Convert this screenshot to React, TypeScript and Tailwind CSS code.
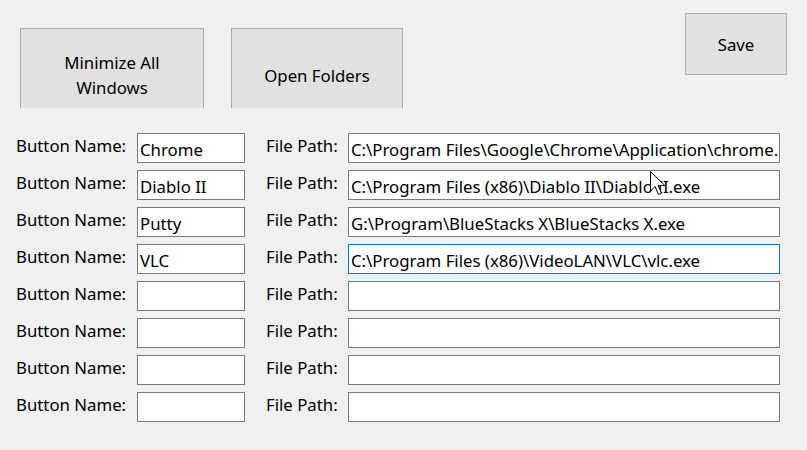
import React from "react";

const rows: { name: string; path: string; focused?: boolean }[] = [
  { name: "Chrome", path: "C:\\Program Files\\Google\\Chrome\\Application\\chrome.exe" },
  { name: "Diablo II", path: "C:\\Program Files (x86)\\Diablo II\\Diablo II.exe" },
  { name: "Putty", path: "G:\\Program\\BlueStacks X\\BlueStacks X.exe" },
  { name: "VLC", path: "C:\\Program Files (x86)\\VideoLAN\\VLC\\vlc.exe", focused: true },
  { name: "", path: "" },
  { name: "", path: "" },
  { name: "", path: "" },
  { name: "", path: "" },
];

export default function App() {
  return (
    <div
      className="relative w-[807px] h-[450px] overflow-hidden bg-[#f0f0f0] text-black text-[16.8px]"
      style={{ fontFamily: '"Noto Sans", "Open Sans", sans-serif' }}
    >
      <div className="flex h-[108px] items-start overflow-hidden">
        <div className="ml-[20px] mt-[28px] flex h-[96px] w-[184px] shrink-0 flex-col items-center justify-center border border-[#adadad] bg-[#e1e1e1] pb-[2px] leading-[25px]">
          <span>Minimize All</span>
          <span>Windows</span>
        </div>
        <div className="ml-[27px] mt-[28px] flex h-[96px] w-[172px] shrink-0 items-center justify-center border border-[#adadad] bg-[#e1e1e1] pb-[2px] leading-[25px]">
          Open Folders
        </div>
        <div className="ml-auto mr-[20px] mt-[13px] flex h-[62px] w-[102px] shrink-0 items-center justify-center border border-[#adadad] bg-[#e1e1e1] leading-[25px]">
          Save
        </div>
      </div>

      <div className="mt-[25px] flex flex-col gap-[7px]">
        {rows.map((r, i) => (
          <div key={i} className="flex h-[30px] items-start">
            <div className="w-[137px] shrink-0 whitespace-nowrap pl-[16px]">Button Name:</div>
            <div className="flex h-[30px] w-[108px] shrink-0 items-center overflow-hidden whitespace-nowrap border border-[#7a7a7a] bg-white pl-[2px] pt-[4px]">
              {r.name}
            </div>
            <div className="ml-[21px] w-[82px] shrink-0 whitespace-nowrap">File Path:</div>
            <div
              className={
                r.focused
                  ? "flex h-[30px] w-[432px] shrink-0 items-center overflow-hidden whitespace-nowrap border border-[#0078d7] bg-white pl-[2px] pt-[4px]"
                  : "flex h-[30px] w-[432px] shrink-0 items-center overflow-hidden whitespace-nowrap border border-[#7a7a7a] bg-white pl-[2px] pt-[4px]"
              }
            >
              {r.path}
            </div>
          </div>
        ))}
      </div>

      <svg
        className="absolute left-[650px] top-[171px]"
        width="17"
        height="26"
        viewBox="0 0 17 26"
      >
        <polygon
          points="0.5,0.5 0.5,20 5,15.5 8.5,23.5 11.5,22.2 8.2,14.5 14.8,14.5"
          fill="white"
          stroke="black"
          strokeWidth="1"
          strokeLinejoin="miter"
        />
      </svg>
    </div>
  );
}
